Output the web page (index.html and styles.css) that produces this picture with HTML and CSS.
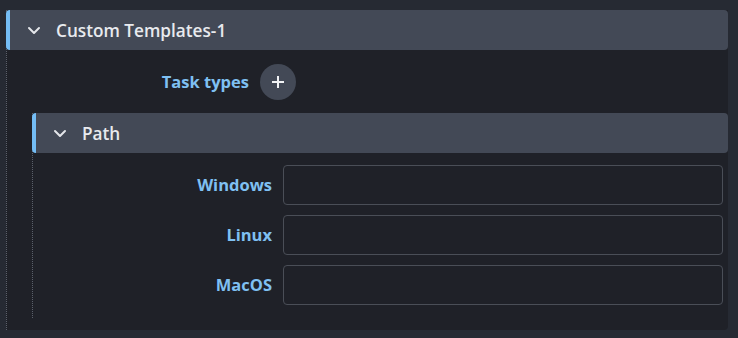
FILE: index.html
```html
<!DOCTYPE html>
<html lang="en">
<head>
    <meta charset="UTF-8">
    <title>Custom Templates</title>
    <link rel="stylesheet" href="styles.css">
</head>
<body>
    <div class="panel">
        <div class="section-header">
            <svg class="chevron" width="14" height="14" viewBox="0 0 14 14"><path d="M2 5 L7 10 L12 5" fill="none" stroke="#e4e6ea" stroke-width="2" stroke-linecap="round" stroke-linejoin="round"/></svg>
            <span class="section-title">Custom Templates-1</span>
        </div>

        <div class="field-row outer-row">
            <label class="field-label">Task types</label>
            <button class="add-button">
                <svg width="14" height="14" viewBox="0 0 14 14"><path d="M7 1 V13 M1 7 H13" stroke="#f2f3f5" stroke-width="2"/></svg>
            </button>
        </div>

        <div class="subsection">
            <div class="section-header">
                <svg class="chevron" width="14" height="14" viewBox="0 0 14 14"><path d="M2 5 L7 10 L12 5" fill="none" stroke="#e4e6ea" stroke-width="2" stroke-linecap="round" stroke-linejoin="round"/></svg>
                <span class="section-title">Path</span>
            </div>
            <div class="fields">
                <div class="field-row inner-row">
                    <label class="field-label">Windows</label>
                    <input class="text-input" type="text">
                </div>
                <div class="field-row inner-row">
                    <label class="field-label">Linux</label>
                    <input class="text-input" type="text">
                </div>
                <div class="field-row inner-row">
                    <label class="field-label">MacOS</label>
                    <input class="text-input" type="text">
                </div>
            </div>
        </div>
    </div>
</body>
</html>
```

FILE: styles.css
```css
:root {
    --outer-bg: #262a33;
    --panel-bg: #1f2128;
    --header-bg: #434956;
    --accent: #74bdf5;
    --label-color: #7fc0f2;
    --text-color: #e8eaee;
    --input-border: #4a4e57;
}

body {
    margin: 0;
    background-color: var(--outer-bg);
    font-family: 'Open Sans', 'Lato', sans-serif;
    color: var(--text-color);
}

.panel {
    margin: 10px 10px 8px 6px;
    background-color: var(--panel-bg);
    border-left: 1px dotted #5b606b;
    padding-bottom: 12px;
    border-radius: 0 0 4px 0;
}

.section-header {
    display: flex;
    align-items: center;
    height: 40px;
    margin-left: -1px;
    background-color: var(--header-bg);
    border-left: 4px solid var(--accent);
    border-radius: 4px;
}

.chevron {
    margin-left: 17px;
    margin-right: 15px;
}

.section-title {
    font-size: 17.2px;
    font-weight: 600;
}

.field-row {
    display: grid;
    align-items: center;
    column-gap: 11px;
}

.outer-row {
    grid-template-columns: 242px 36px;
    margin: 14px 0 13px;
}

.inner-row {
    grid-template-columns: 239px 1fr;
}

.field-label {
    text-align: right;
    font-size: 16.5px;
    font-weight: 700;
    padding-bottom: 2px;
    color: var(--label-color);
}

.add-button {
    width: 36px;
    height: 36px;
    padding: 0;
    border: none;
    border-radius: 50%;
    background-color: var(--header-bg);
    display: flex;
    align-items: center;
    justify-content: center;
}

.subsection {
    margin-left: 25px;
    border-left: 1px dotted #5b606b;
}

.fields {
    display: flex;
    flex-direction: column;
    gap: 10px;
    padding: 12px 5px 13px 0;
}

.text-input {
    height: 40px;
    box-sizing: border-box;
    background-color: var(--panel-bg);
    border: 1px solid var(--input-border);
    border-radius: 4px;
    color: var(--text-color);
}
```
